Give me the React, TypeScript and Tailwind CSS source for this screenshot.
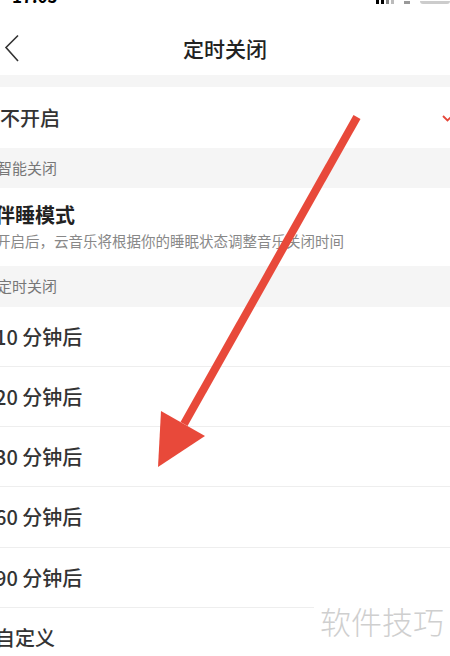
import React from "react";

// 定时关闭 设置页
const ROWS = [
  { label: "10 分钟后", h: "h-[60px]" },
  { label: "20 分钟后", h: "h-[60px]" },
  { label: "30 分钟后", h: "h-[60px]" },
  { label: "60 分钟后", h: "h-[61px]" },
  { label: "90 分钟后", h: "h-[60px]" },
  { label: "自定义", h: "h-[60px]" },
];

const SectionHeader = ({ label, className = "" }: { label: string; className?: string }) => (
  <div className={`bg-[#f5f5f5] flex items-center ${className}`}>
    <span className="ml-[-3px] text-[15px] text-[#777]">{label}</span>
  </div>
);

export default function App() {
  return (
    <div
      className="relative w-[450px] h-[656px] overflow-hidden bg-white text-[#333]"
      style={{ fontFamily: '"Noto Sans CJK SC", "Noto Sans", sans-serif' }}
    >
      {/* status bar, mostly cut off */}
      <div className="h-[22px] relative">
        <div className="h-[4px] overflow-hidden flex justify-between items-end">
          <span className="ml-[12px] text-[17px] font-bold leading-none text-black">17:05</span>
          <div className="flex items-end gap-[10px] mr-0">
            <div className="flex gap-[2px] items-end">
              <div className="w-[3px] h-[4px] bg-black" />
              <div className="w-[3px] h-[4px] bg-black" />
              <div className="w-[3px] h-[4px] bg-[#888]" />
              <div className="w-[3px] h-[4px] bg-[#bbb]" />
            </div>
            <div className="w-[6px] h-[3px] bg-[#999]" />
            <div className="w-[30px] h-[3px] bg-[#ccc] rounded-b-sm" />
          </div>
        </div>
      </div>

      {/* nav bar */}
      <div className="h-[53px] flex items-center relative">
        <svg className="absolute left-[4px] top-[12px]" width="16" height="30" viewBox="0 0 16 30">
          <path d="M14 1.5 L2 13.5 L14 27" fill="none" stroke="#333" strokeWidth="1.6" />
        </svg>
        <div className="flex-1 text-center text-[21px] font-medium text-[#222]">定时关闭</div>
      </div>

      <div className="h-[12px] bg-[#f5f5f5]" />

      {/* 不开启 */}
      <div className="h-[61px] flex items-center justify-between">
        <span className="text-[20px] font-medium">不开启</span>
        <svg className="mr-[-6px]" width="14" height="10" viewBox="0 0 14 10">
          <path d="M1 3 L5.5 7.5 L13 0" fill="none" stroke="#e5473a" strokeWidth="1.8" />
        </svg>
      </div>

      <SectionHeader label="智能关闭" className="h-[40px]" />

      {/* 伴睡模式 */}
      <div className="h-[78px] flex flex-col justify-center pb-[2px]">
        <span className="ml-[-5px] text-[20px] font-bold leading-[28px] text-[#222]">伴睡模式</span>
        <span className="ml-[-4px] text-[14.5px] leading-[23px] text-[#888] whitespace-nowrap">
          开启后，云音乐将根据你的睡眠状态调整音乐关闭时间
        </span>
      </div>

      <SectionHeader label="定时关闭" className="h-[41px]" />

      {ROWS.map((r) => (
        <div key={r.label} className={`${r.h} flex items-center border-b border-[#eeeeee]`}>
          <span className="ml-[-5px] text-[20px] font-medium text-[#333] whitespace-pre">{r.label}</span>
        </div>
      ))}

      {/* watermark */}
      <div className="absolute left-[314px] top-[600px] bg-white pl-[6px] pr-[6px] text-[31px] leading-[42px] text-[#cfcfcf] font-light whitespace-nowrap">
        软件技巧
      </div>

      {/* annotation arrow */}
      <svg className="absolute left-0 top-0 pointer-events-none" width="450" height="656" viewBox="0 0 450 656">
        <line x1="357" y1="117" x2="184" y2="424" stroke="#e8493a" strokeWidth="8" />
        <polygon points="161,411 205,436 158,467" fill="#e8493a" />
      </svg>
    </div>
  );
}
